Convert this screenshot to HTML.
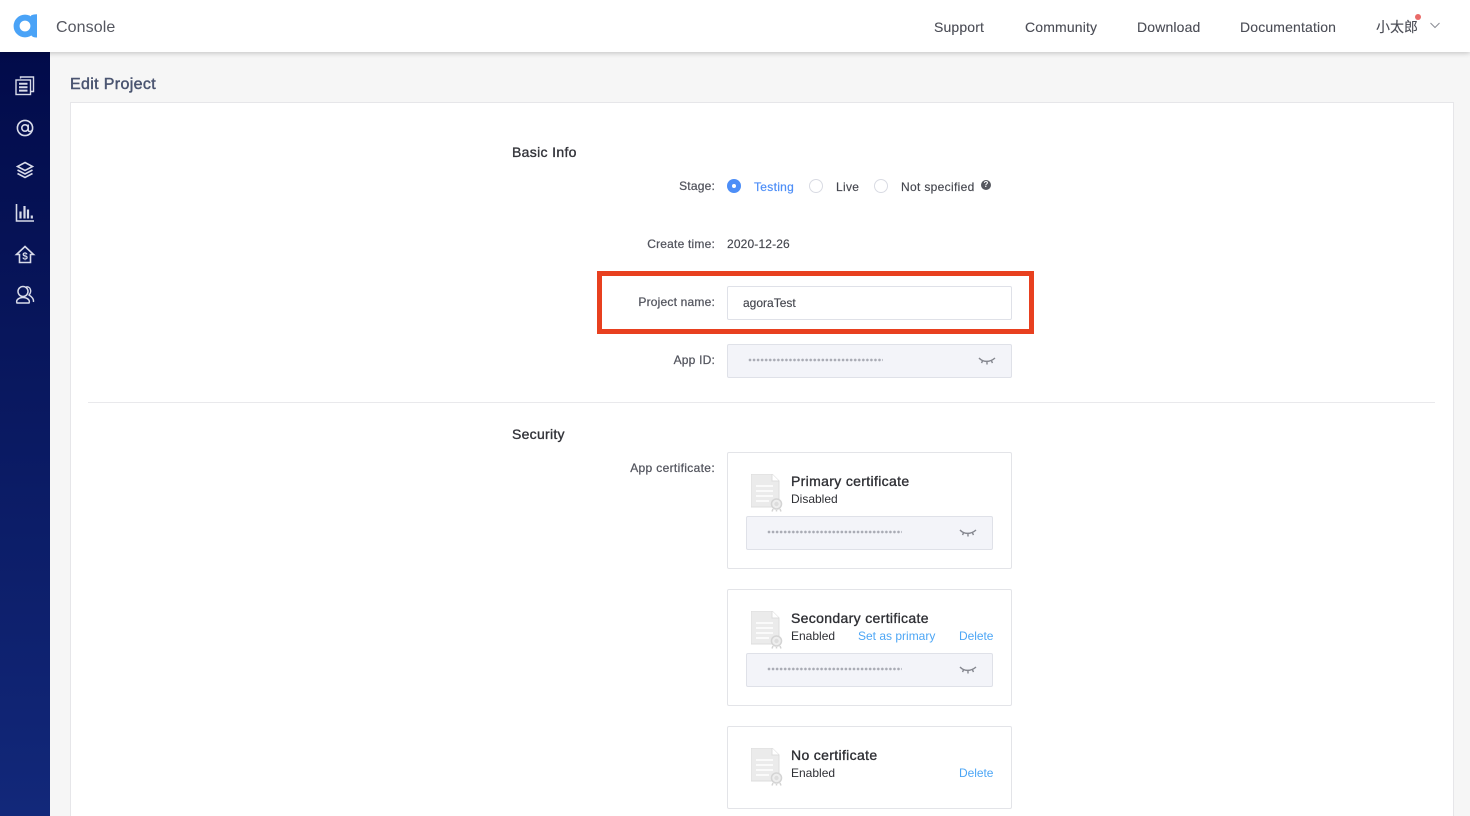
<!DOCTYPE html>
<html><head><meta charset="utf-8">
<style>
*{box-sizing:border-box}
html,body{margin:0;padding:0;width:1470px;height:816px;overflow:hidden;background:#f6f6f6;font-family:"Liberation Sans","Noto Sans CJK SC",sans-serif;color:#45474f}
#wrap{position:relative;width:1470px;height:816px;overflow:hidden;background:#f6f6f6}
.a{position:absolute;white-space:nowrap}
.hdr{position:absolute;left:0;top:0;width:1470px;height:52px;background:#fff;box-shadow:0 1px 5px rgba(0,0,0,.22);z-index:3}
.side{position:absolute;left:0;top:52px;width:50px;height:764px;background:linear-gradient(180deg,#020b4a 0%,#12287a 100%);z-index:2}
.nav{font-size:14px;color:#4a4c55;top:19px;line-height:16px;letter-spacing:.15px;-webkit-text-stroke:.1px #4a4c55}
.panel{position:absolute;left:70px;top:102px;width:1384px;height:730px;background:#fff;border:1px solid #e6e6e9}
.lbl{font-size:12px;line-height:14px;text-align:right;right:755px;color:#53555e;-webkit-text-stroke:.25px #53555e;letter-spacing:.2px}
.h{font-size:14px;line-height:16px;color:#33343a;-webkit-text-stroke:.35px #33343a;letter-spacing:.33px}
.t{font-size:12px;line-height:14px;color:#45474f;-webkit-text-stroke:.15px #45474f;letter-spacing:.15px}
.box{position:absolute;border:1px solid #dfe1e8;border-radius:2px;background:#fff}
.fld{position:absolute;border:1px solid #dfe1e8;border-radius:2px;background:#f3f4f9;height:34px}
.dots{position:absolute;left:20px;top:12px;width:135px;height:6px;background:radial-gradient(circle at 2px 3px,#a9abb4 1.100px,transparent 1.600px) 0 0/4.060px 6px repeat-x}
.eye{position:absolute;right:15px;top:11px}
.card{position:absolute;left:727px;width:285px;background:#fff;border:1px solid #e3e4e8;border-radius:2px}
.ct{position:absolute;left:63px;font-size:14px;line-height:16px;color:#2f3035;-webkit-text-stroke:.35px #2f3035;white-space:nowrap;letter-spacing:.34px}
.cs{position:absolute;left:63px;font-size:12px;line-height:14px;color:#2f3035;white-space:nowrap}
.lnk{position:absolute;font-size:12px;line-height:14px;color:#4da6f5;white-space:nowrap}
.doc{position:absolute;left:23px}
</style></head><body>
<div id="wrap">

<div class="hdr">
<svg class="a" style="left:13px;top:13px" width="25" height="25" viewBox="0 0 25 25"><circle cx="12" cy="13" r="8.400" fill="none" stroke="#4aa3f7" stroke-width="6"/><path d="M18 2.500C19.200 1.800 21 1.200 24 1.200V24.500C21 24.500 19.200 24 18 22Z" fill="#4aa3f7"/></svg>
<div class="a" style="left:56px;top:18px;font-size:16px;line-height:19px;color:#555760;letter-spacing:.1px">Console</div>
<div class="a nav" style="left:934px">Support</div>
<div class="a nav" style="left:1025px">Community</div>
<div class="a nav" style="left:1137px">Download</div>
<div class="a nav" style="left:1240px">Documentation</div>
<div class="a nav" style="left:1376px;top:19px;letter-spacing:0">小太郎</div>
<div class="a" style="left:1415px;top:14px;width:6px;height:6px;border-radius:50%;background:#e96a68"></div>
<svg class="a" style="left:1430px;top:22px" width="10" height="7" viewBox="0 0 10 7"><path d="M.5 1L5 5.500 9.500 1" fill="none" stroke="#8a8c94" stroke-width="1"/></svg>
</div>

<div class="side">
<svg class="a" style="left:0;top:0" width="50" height="270" viewBox="0 0 50 270" fill="none" stroke="#d8dbe9" stroke-width="1.400">
<path d="M20.500 26.500V25H33.500V39.500H31"/><rect x="16" y="28" width="14.500" height="14.500"/><path d="M19 31.800H27.500M19 35.200H27.500M19 38.600H27.500" stroke-width="2"/>
<circle cx="25" cy="76" r="7.600" stroke-width="1.600"/><circle cx="25" cy="76" r="3.200" stroke-width="1.600"/><path d="M28.200 72.500V78C28.200 80 31.500 80 32.600 77.500" stroke-width="1.500"/>
<path d="M25 110.500L32.500 114.500 25 118.500 17.500 114.500Z" stroke-width="1.600"/><path d="M17.500 118L25 122 32.500 118M17.500 121.500L25 125.500 32.500 121.500" stroke-width="1.600"/>
<path d="M16.500 152V169H34" stroke-width="1.600"/><path d="M20.500 159.500V166.500M24.500 154V166.500M28 157.500V166.500M31.800 163.500V166.500" stroke-width="2.200"/>
<path d="M16.500 202.500L25 194.500 33.500 202.500H30.500V210.500H19.500V202.500Z" stroke-width="1.600"/>
<circle cx="23" cy="239.500" r="5" stroke-width="1.500"/><path d="M17 251C15.500 248 19 245.500 23 245.500C27 245.500 30.500 248 29 251Z" stroke-width="1.500"/><path d="M26 235C30 234 32.500 239 29 243C31.500 244.500 34 247 33.500 250" stroke-width="1.400"/>
<text x="25" y="207.500" font-size="10" font-weight="bold" font-family="Liberation Sans" fill="#d8dbe9" stroke="none" text-anchor="middle">$</text>
</svg>
</div>

<div class="a" style="left:70px;top:75px;font-size:16px;line-height:20px;color:#4a5470;-webkit-text-stroke:.45px #4a5470;letter-spacing:.35px">Edit Project</div>
<div class="panel"></div>
<div class="a" style="left:88px;top:402px;width:1347px;height:1px;background:#e9e9ec"></div>

<div class="a h" style="left:512px;top:144px">Basic Info</div>
<div class="a lbl" style="top:179px">Stage:</div>
<div class="a" style="left:727px;top:179px;width:14px;height:14px;border-radius:50%;background:#4d8ef7"></div>
<div class="a" style="left:732px;top:184px;width:4px;height:4px;border-radius:50%;background:#fff"></div>
<div class="a t" style="left:754px;top:180px;color:#4d8ef7;-webkit-text-stroke:.2px #4d8ef7;letter-spacing:.3px">Testing</div>
<div class="a" style="left:809px;top:179px;width:14px;height:14px;border-radius:50%;border:1px solid #d9dbe3;background:#fff"></div>
<div class="a t" style="left:836px;top:180px;letter-spacing:.3px">Live</div>
<div class="a" style="left:874px;top:179px;width:14px;height:14px;border-radius:50%;border:1px solid #d9dbe3;background:#fff"></div>
<div class="a t" style="left:901px;top:180px;letter-spacing:.33px">Not specified</div>
<div class="a" style="left:981px;top:180px;width:10px;height:10px;border-radius:50%;background:#56585f;color:#fff;font-size:8px;line-height:10px;text-align:center;font-weight:bold">?</div>

<div class="a lbl" style="top:237px">Create time:</div>
<div class="a t" style="left:727px;top:237px">2020-12-26</div>

<div class="a" style="left:597px;top:271px;width:437px;height:63px;border:5px solid #e8401f"></div>
<div class="a lbl" style="top:295px">Project name:</div>
<div class="box" style="left:727px;top:286px;width:285px;height:34px"></div>
<div class="a t" style="left:743px;top:296px;letter-spacing:0">agoraTest</div>

<div class="a lbl" style="top:353px">App ID:</div>
<div class="fld" style="left:727px;top:344px;width:285px"><div class="dots"></div>
<svg class="eye" width="18" height="10" viewBox="0 0 18 10" fill="none" stroke="#85878f" stroke-width="1.400"><path d="M1 2C5 6.500 12 6.500 17 2M4.500 5L3.500 7M9 6V8.500M13.500 5L14.500 7"/></svg></div>

<div class="a h" style="left:512px;top:426px;letter-spacing:.28px">Security</div>
<div class="a lbl" style="top:461px;letter-spacing:.34px">App certificate:</div>

<div class="card" style="top:452px;height:117px">
<svg class="doc" style="top:21px" width="33" height="38" viewBox="0 0 33 38"><path d="M0 0H21L28 7V33H0Z" fill="#ebebeb" stroke="#dcdcdc"/><path d="M21 0V7H28" fill="#fff" stroke="#dcdcdc"/><path d="M5 12H22M5 17H22M5 22H22M5 27H18" stroke="#fff" stroke-width="1.500"/><circle cx="25.500" cy="30" r="5" fill="#eee" stroke="#d4d4d4" stroke-width="1.500"/><circle cx="25.500" cy="30" r="2.200" fill="#ddd"/><path d="M22 35L21 37.500M29 35L30 37.500M25.500 36V37.500" stroke="#d4d4d4" stroke-width="1.500"/></svg>
<div class="ct" style="top:20px">Primary certificate</div>
<div class="cs" style="top:39px">Disabled</div>
<div class="fld" style="left:18px;top:63px;width:247px"><div class="dots"></div>
<svg class="eye" width="18" height="10" viewBox="0 0 18 10" fill="none" stroke="#85878f" stroke-width="1.400"><path d="M1 2C5 6.500 12 6.500 17 2M4.500 5L3.500 7M9 6V8.500M13.500 5L14.500 7"/></svg></div>
</div>

<div class="card" style="top:589px;height:117px">
<svg class="doc" style="top:21px" width="33" height="38" viewBox="0 0 33 38"><path d="M0 0H21L28 7V33H0Z" fill="#ebebeb" stroke="#dcdcdc"/><path d="M21 0V7H28" fill="#fff" stroke="#dcdcdc"/><path d="M5 12H22M5 17H22M5 22H22M5 27H18" stroke="#fff" stroke-width="1.500"/><circle cx="25.500" cy="30" r="5" fill="#eee" stroke="#d4d4d4" stroke-width="1.500"/><circle cx="25.500" cy="30" r="2.200" fill="#ddd"/><path d="M22 35L21 37.500M29 35L30 37.500M25.500 36V37.500" stroke="#d4d4d4" stroke-width="1.500"/></svg>
<div class="ct" style="top:20px">Secondary certificate</div>
<div class="cs" style="top:39px">Enabled</div>
<div class="lnk" style="left:130px;top:39px">Set as primary</div>
<div class="lnk" style="left:231px;top:39px;letter-spacing:-.06px">Delete</div>
<div class="fld" style="left:18px;top:63px;width:247px"><div class="dots"></div>
<svg class="eye" width="18" height="10" viewBox="0 0 18 10" fill="none" stroke="#85878f" stroke-width="1.400"><path d="M1 2C5 6.500 12 6.500 17 2M4.500 5L3.500 7M9 6V8.500M13.500 5L14.500 7"/></svg></div>
</div>

<div class="card" style="top:726px;height:83px">
<svg class="doc" style="top:21px" width="33" height="38" viewBox="0 0 33 38"><path d="M0 0H21L28 7V33H0Z" fill="#ebebeb" stroke="#dcdcdc"/><path d="M21 0V7H28" fill="#fff" stroke="#dcdcdc"/><path d="M5 12H22M5 17H22M5 22H22M5 27H18" stroke="#fff" stroke-width="1.500"/><circle cx="25.500" cy="30" r="5" fill="#eee" stroke="#d4d4d4" stroke-width="1.500"/><circle cx="25.500" cy="30" r="2.200" fill="#ddd"/><path d="M22 35L21 37.500M29 35L30 37.500M25.500 36V37.500" stroke="#d4d4d4" stroke-width="1.500"/></svg>
<div class="ct" style="top:20px">No certificate</div>
<div class="cs" style="top:39px">Enabled</div>
<div class="lnk" style="left:231px;top:39px;letter-spacing:-.06px">Delete</div>
</div>

</div>
</body></html>
